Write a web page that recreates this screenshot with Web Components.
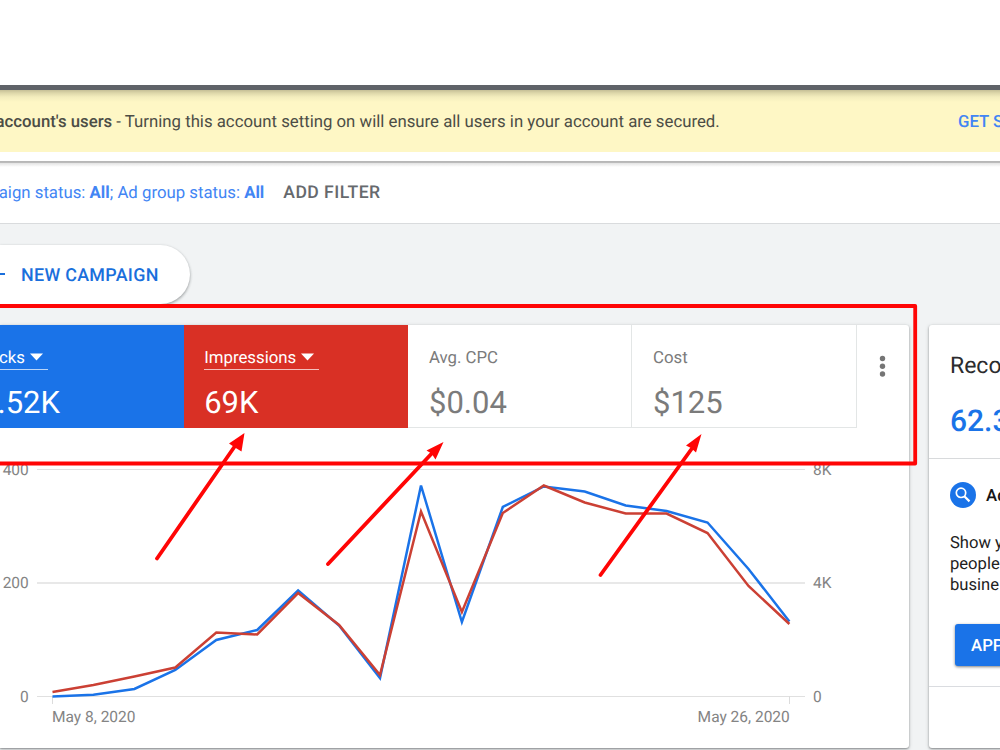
<!DOCTYPE html>
<html lang="en">
<head>
<meta charset="utf-8">
<title>Campaigns overview</title>
<style>
html, body {
    margin: 0;
    height: 750px;
    overflow: hidden;
}
body {
    font-family: Roboto, "Liberation Sans", sans-serif;
    text-rendering: geometricPrecision;
    background: #fff;
}
</style>
</head>
<body>
<ads-page>
    <ads-banner slot="top" action="GET S"><b>account's users</b> - Turning this account setting on will ensure all users in your account are secured.</ads-banner>
    <ads-filters slot="top"><span>aign status: <b>All</b>; Ad group status: <b>All</b></span></ads-filters>
    <new-campaign slot="content">NEW CAMPAIGN</new-campaign>
    <overview-card slot="main">
        <score-tile class="clicks" label="cks" value=".52K" menu></score-tile>
        <score-tile class="impressions" label="Impressions" value="69K" menu></score-tile>
        <score-tile label="Avg. CPC" value="$0.04"></score-tile>
        <score-tile label="Cost" value="$125"></score-tile>
        <trend-chart slot="chart"></trend-chart>
    </overview-card>
    <reco-card slot="side"></reco-card>
    <mark-up slot="overlay"></mark-up>
</ads-page>

<script>
function define(name, html) {
  const template = document.createElement('template');
  template.innerHTML = html;
  customElements.define(name, class extends HTMLElement {
    constructor() {
      super();
      this.attachShadow({ mode: 'open' });
      this.shadowRoot.appendChild(template.content.cloneNode(true));
    }

    connectedCallback() {
      this.shadowRoot.querySelectorAll('[data-attr]').forEach((el) => {
        el.textContent = this.getAttribute(el.dataset.attr);
      });
    }
  });
}

define('ads-page', `
<style>
:host {
    display: flex;
    flex-direction: column;
    position: relative;
    width: 1000px;
    height: 750px;
    overflow: hidden;
    padding-top: 85px;
    box-sizing: border-box;
}
.content {
    flex: 1;
    background: #f1f3f4;
    border-top: 1px solid #d9dbdd;
    padding-top: 21px;
}
.cards {
    display: flex;
    gap: 20px;
    margin-top: 21px;
}
</style>
<slot name="top"></slot>
<div class="content">
    <slot name="content"></slot>
    <div class="cards">
        <slot name="main"></slot>
        <slot name="side"></slot>
    </div>
</div>
<slot name="overlay"></slot>
`);

define('ads-banner', `
<style>
:host {
    display: block;
    height: 76px;
    box-sizing: border-box;
    border-top: 5px solid #5f6368;
    background: #fff;
}
.bar {
    display: flex;
    height: 61.5px;
    background: linear-gradient(#c5bf96 0, #ddd7aa 3px, #f3edbd 7px, #fef7c5 12px, #fef7c5 100%);
    color: #4c4d45;
    font-size: 16.78px;
    line-height: 64px;
    white-space: nowrap;
}
.text {
    width: 958px;
    flex: none;
    text-indent: -4.5px;
}
::slotted(b) {
    font-weight: 500;
}
.action {
    color: #4285f4;
    font-weight: 500;
    line-height: 65px;
}
</style>
<div class="bar">
    <div class="text"><slot></slot></div>
    <div class="action" data-attr="action"></div>
</div>
`);

define('ads-filters', `
<style>
:host {
    display: flex;
    gap: 19px;
    height: 62px;
    line-height: 65px;
    background: linear-gradient(#b5b5b5 0, #bdbdbd 2px, #e6e6e6 2.5px, #fff 6px);
    color: #4285f4;
    font-size: 16.78px;
    white-space: nowrap;
}
.add {
    color: #66696d;
    font-weight: 500;
    font-size: 17.6px;
    letter-spacing: .45px;
}
::slotted(span) {
    margin-left: -.5px;
    text-indent: -.8px;
}
</style>
<slot></slot>
<span class="add">ADD FILTER</span>
`);

define('new-campaign', `
<style>
:host {
    display: flex;
    align-items: center;
    width: 190px;
    height: 59px;
    line-height: 22px;
    box-sizing: border-box;
    padding-top: 2px;
    border-radius: 0 30px 30px 0;
    background: #fff;
    box-shadow: 0 1px 3px rgba(60, 64, 67, .4), 0 2px 3px rgba(60, 64, 67, .15);
    color: #1a6fdc;
    font-weight: 500;
    font-size: 17.9px;
    letter-spacing: .3px;
    white-space: nowrap;
}
i {
    width: 4.5px;
    height: 2px;
    margin: 0 16.5px 4px 0;
    background: #1a6fdc;
}
</style>
<i></i><slot></slot>
`);

define('overview-card', `
<style>
:host {
    display: block;
    width: 909px;
    height: 423px;
    border-radius: 0 3px 3px 0;
    background: #fff;
    box-shadow: 0 1px 2px rgba(60, 64, 67, .5), 0 1px 4px rgba(60, 64, 67, .2);
}
.tiles {
    display: flex;
    height: 103px;
}
svg {
    margin: 30px 0 0 19px;
}
</style>
<div class="tiles">
    <slot></slot>
    <svg width="13" height="24" fill="#757575">
        <circle cx="6.5" cy="3.5" r="2.7"/><circle cx="6.5" cy="11.2" r="2.7"/><circle cx="6.5" cy="19" r="2.7"/>
    </svg>
</div>
<slot name="chart"></slot>
`);

define('score-tile', `
<style>
:host {
    display: block;
    width: 224px;
    height: 103px;
    box-sizing: border-box;
    padding: 19px 0 0 21px;
    border: solid #e3e6e6;
    border-width: 0 1px 1px 0;
    color: #7b7b7b;
    white-space: nowrap;
}
:host(:last-of-type) {
    width: 225px;
}
:host(.clicks) {
    width: 184px;
    border: 0;
    padding-left: 0;
    background: #1a73e8;
    color: #fff;
}
:host(.clicks) .label {
    text-indent: -1px;
}
:host(.clicks) .value {
    text-indent: -2.5px;
}
:host(.impressions) {
    border: 0;
    padding-left: 20.2px;
    background: #d93025;
    color: #fff;
}
.label {
    display: inline-flex;
    align-items: center;
    height: 25px;
    line-height: 22px;
    font-size: 16.8px;
    border-bottom: 1px solid transparent;
}
span {
    padding-top: 3px;
}
:host([menu]) .label {
    border-color: rgba(255, 255, 255, .7);
}
svg {
    display: none;
    margin: 0 5px 0 5px;
}
:host([menu]) svg {
    display: block;
}
.value {
    font-size: 31px;
    line-height: 36px;
    margin-top: 15px;
}
</style>
<div class="label"><span data-attr="label"></span><svg width="13" height="8"><path d="M0 .5H13L6.500 7.500Z" fill="currentColor"/></svg></div>
<div class="value" data-attr="value"></div>
`);

class TrendChart extends HTMLElement {
  constructor() {
    super();
    this.attachShadow({ mode: 'open' });
    this.clicks = [696.5, 694.8, 689, 670, 640, 630, 590.500, 625.5, 678, 485.5, 622, 507, 486.5, 491.500, 505.5, 511, 522.5, 569, 621.5];
    this.impressions = [692, 685, 676.5, 667.5, 632.5, 634.500, 593, 625, 675, 511.500, 612, 513, 485.5, 502.5, 513.5, 513.5, 533, 586, 624];
  }

  connectedCallback() {
    this.render();
  }

  points(values) {
    return values.map((y, i) => `${(52.5 + i * 40.94).toFixed(1)},${y - 428}`).join(' ');
  }

  render() {
    this.shadowRoot.innerHTML = `
<style>
:host {
    display: block;
    height: 320px;
}
svg {
    display: block;
}
text {
    font-size: 15.5px;
    fill: #848484;
}
polyline {
    fill: none;
    stroke-width: 2.5;
}
</style>
<svg width="909" height="320">
    <path d="M37 41.5H805M37 268.5H805" stroke="#e0e0e0"/>
    <path d="M37 155H805" stroke="#e8e8e8" stroke-width="2"/>
    <path d="M52.5 268V276M789.5 268V276" stroke="#dcdcdc"/>
    <text x="28.8" y="46.500" text-anchor="end">400</text>
    <text x="28.8" y="160" text-anchor="end">200</text>
    <text x="28.8" y="273.5" text-anchor="end">0</text>
    <text x="813" y="46.500">8K</text>
    <text x="813" y="160">4K</text>
    <text x="813" y="273.5">0</text>
    <text x="52" y="294">May 8, 2020</text>
    <text x="789.8" y="294" text-anchor="end">May 26, 2020</text>
    <polyline points="${this.points(this.clicks)}" stroke="#1a73e8"/>
    <polyline points="${this.points(this.impressions)}" stroke="#cb4034"/>
</svg>`;
  }
}
customElements.define('trend-chart', TrendChart);

define('reco-card', `
<style>
:host {
    display: block;
    width: 120px;
    height: 423px;
    flex: none;
    border-radius: 3px;
    background: #fff;
    box-shadow: 0 1px 2px rgba(60, 64, 67, .5), 0 1px 4px rgba(60, 64, 67, .2);
    white-space: nowrap;
}
.head {
    height: 134px;
    padding: 27px 0 0 21px;
    box-sizing: border-box;
    border-bottom: 1px solid #d8dadc;
}
.title {
    font-size: 23px;
    line-height: 28px;
    color: #2b2c2e;
}
.score {
    margin-top: 24px;
    font-size: 30px;
    line-height: 36px;
    font-weight: 500;
    color: #1a73e8;
}
.body {
    height: 228px;
    box-sizing: border-box;
    padding: 22.5px 0 0 21px;
    border-bottom: 1px solid #dadce0;
}
.item {
    display: flex;
    align-items: center;
    gap: 10px;
    height: 27px;
    font-size: 16.8px;
    font-weight: 500;
    color: #151515;
}
.item span {
    padding-top: 1px;
}
p {
    margin: 24.5px 0 0;
    font-size: 16.6px;
    line-height: 21px;
    color: #222;
}
.apply {
    width: 110px;
    height: 42px;
    box-sizing: border-box;
    margin: 28px 0 0 5px;
    padding-left: 16px;
    border-radius: 3px;
    background: #1a73e8;
    box-shadow: 0 1px 3px rgba(0, 0, 0, .5);
    color: #fff;
    font-size: 16.8px;
    font-weight: 500;
    line-height: 45px;
}
</style>
<div class="head">
    <div class="title">Reco</div>
    <div class="score">62.3</div>
</div>
<div class="body">
    <div class="item">
        <svg width="26" height="26"><circle cx="13" cy="13" r="13" fill="#1a73e8"/><circle cx="11" cy="10.800" r="4.700" fill="none" stroke="#fff" stroke-width="1.7"/><path d="M14.300 14.200L19.500 19.400" stroke="#fff" stroke-width="2.200"/></svg>
        <span>Ad</span>
    </div>
    <p>Show y<br>people<br>busine</p>
    <div class="apply">APP</div>
</div>
`);

// red frame and arrows drawn over the page
define('mark-up', `
<style>
:host {
    position: absolute;
    inset: 0;
}
svg {
    display: block;
}
</style>
<svg width="1000" height="750" fill="none" stroke="#ff0505" stroke-width="3.8" stroke-linecap="round" stroke-linejoin="round">
    <rect x="-10" y="306" width="925.200" height="157.500"/>
    <path d="M157 558.500L235 446M328 564L435 450M600.500 575L693 447"/>
    <g fill="#ff0505" stroke="none">
        <path d="M244.500 433L241.500 451.500L235 447.500L229 443.500Z"/>
        <path d="M443.500 442L435.500 459.500L431.500 453.500L426.500 450.500Z"/>
        <path d="M701.500 434L696 452.500L691 448L686 445.500Z"/>
    </g>
</svg>
`);
</script>
</body>
</html>
